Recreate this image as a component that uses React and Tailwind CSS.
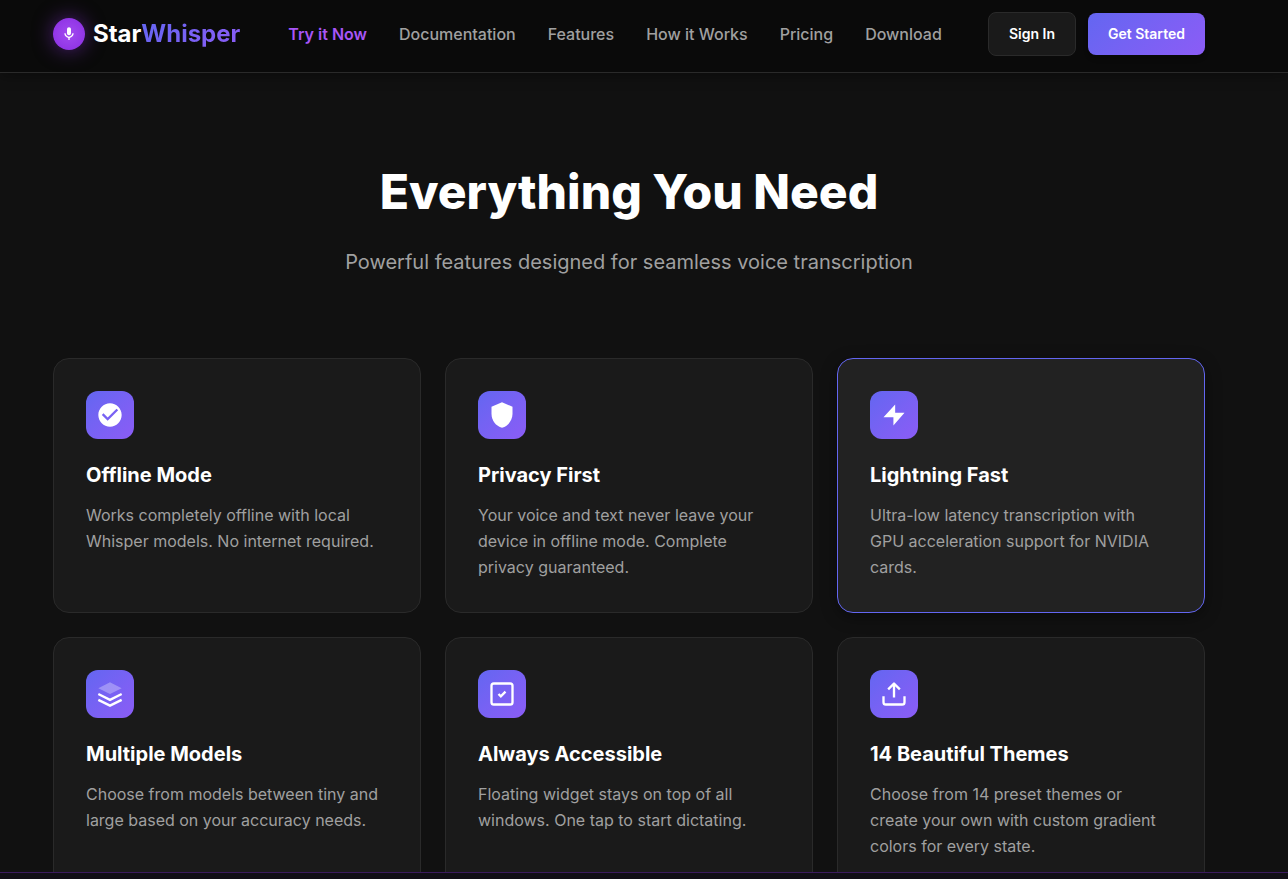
const NAV_LINKS = ["Documentation", "Features", "How it Works", "Pricing", "Download"];

function CheckCircleIcon() {
  return (
    <svg viewBox="0 0 24 24" className="size-7" fill="currentColor" aria-hidden="true">
      <path d="M12 2C6.48 2 2 6.48 2 12s4.48 10 10 10 10-4.48 10-10S17.52 2 12 2zm-2 15l-5-5 1.41-1.41L10 14.17l7.59-7.59L19 8l-9 9z" />
    </svg>
  );
}

function ShieldIcon() {
  return (
    <svg viewBox="0 0 24 24" className="size-7" fill="currentColor" aria-hidden="true">
      <path d="M12 1L3 5v6c0 5.55 3.84 10.74 9 12 5.16-1.26 9-6.45 9-12V5l-9-4z" />
    </svg>
  );
}

function BoltIcon() {
  return (
    <svg viewBox="0 0 24 24" className="size-7" fill="currentColor" aria-hidden="true">
      <path d="M13 3L3 14h8.5v7L21 10h-8z" />
    </svg>
  );
}

function LayersIcon() {
  return (
    <svg viewBox="0 0 24 24" className="size-7" fill="none" aria-hidden="true">
      <path d="M12 2L2 7l10 5 10-5-10-5z" fill="currentColor" opacity="0.3" />
      <path d="M2 17l10 5 10-5M2 12l10 5 10-5" stroke="currentColor" strokeWidth="2" />
    </svg>
  );
}

function CheckSquareIcon() {
  return (
    <svg viewBox="0 0 24 24" className="size-7" fill="none" stroke="currentColor" strokeWidth="2" aria-hidden="true">
      <rect x="3" y="3" width="18" height="18" rx="2" />
      <path d="M9 12l2 2 4-4" />
    </svg>
  );
}

function UploadIcon() {
  return (
    <svg
      viewBox="0 0 24 24"
      className="size-7"
      fill="none"
      stroke="currentColor"
      strokeWidth="2"
      strokeLinejoin="round"
      aria-hidden="true"
    >
      <path d="M12 15V3M7 8l5-5 5 5M3 14v5a2 2 0 0 0 2 2h14a2 2 0 0 0 2-2v-5" />
    </svg>
  );
}

const FEATURES = [
  {
    title: "Offline Mode",
    text: "Works completely offline with local Whisper models. No internet required.",
    Icon: CheckCircleIcon,
  },
  {
    title: "Privacy First",
    text: "Your voice and text never leave your device in offline mode. Complete privacy guaranteed.",
    Icon: ShieldIcon,
  },
  {
    title: "Lightning Fast",
    text: "Ultra-low latency transcription with GPU acceleration support for NVIDIA cards.",
    Icon: BoltIcon,
    active: true,
  },
  {
    title: "Multiple Models",
    text: "Choose from models between tiny and large based on your accuracy needs.",
    Icon: LayersIcon,
  },
  {
    title: "Always Accessible",
    text: "Floating widget stays on top of all windows. One tap to start dictating.",
    Icon: CheckSquareIcon,
  },
  {
    title: "14 Beautiful Themes",
    text: "Choose from 14 preset themes or create your own with custom gradient colors for every state.",
    Icon: UploadIcon,
  },
];

function Header() {
  return (
    <header className="z-10 border-b border-[#2a2a2a] bg-[#0a0a0a] pr-[30px] shadow-[0_4px_12px_rgba(0,0,0,0.3)]">
      <div className="mx-auto flex h-[72px] max-w-[1200px] items-center px-6 pb-1">
        <a href="#home" className="flex items-center gap-2">
          <span className="flex size-8 items-center justify-center rounded-full bg-radial from-[#a24af0] to-[#8a2be2] shadow-[0_0_20px_rgba(147,51,234,0.5)]">
            <svg viewBox="0 0 24 24" className="size-4 text-white" fill="currentColor" aria-hidden="true">
              <path d="M12 14c1.66 0 3-1.34 3-3V5c0-1.66-1.34-3-3-3S9 3.34 9 5v6c0 1.66 1.34 3 3 3z" />
              <path d="M17 11c0 2.76-2.24 5-5 5s-5-2.24-5-5H5c0 3.53 2.61 6.43 6 6.92V21h2v-3.08c3.39-.49 6-3.39 6-6.92h-2z" />
            </svg>
          </span>
          <span className="text-2xl font-bold text-white">
            Star
            <span className="bg-linear-135 from-[#6366f1] to-[#8b5cf6] bg-clip-text text-transparent">Whisper</span>
          </span>
        </a>
        <nav className="ml-12 flex items-center gap-8 text-base font-medium whitespace-nowrap text-[#a0a0a0]">
          <a href="#try" className="font-semibold text-[#a855f7]">Try it Now</a>
          {NAV_LINKS.map((label) => (
            <a key={label} href="#section">{label}</a>
          ))}
        </nav>
        <div className="ml-auto flex items-center gap-3 text-sm font-semibold whitespace-nowrap text-white">
          <button type="button" className="h-11 rounded-lg border border-[#2a2a2a] bg-[#1a1a1a] px-5">
            Sign In
          </button>
          <button type="button" className="h-[42px] rounded-lg bg-linear-135 from-[#6366f1] to-[#8b5cf6] px-5 shadow-md">
            Get Started
          </button>
        </div>
      </div>
    </header>
  );
}

function FeatureCard({ title, text, Icon, active }) {
  const tone = active
    ? "border-[#6366f1] bg-[#222222] shadow-[0_4px_16px_rgba(0,0,0,0.4)]"
    : "border-[#2a2a2a] bg-[#1a1a1a]";
  return (
    <article className={`rounded-2xl border p-8 ${tone}`}>
      <div className="mb-5 flex size-12 items-center justify-center rounded-xl bg-linear-135 from-[#6366f1] to-[#8b5cf6] text-white">
        <Icon />
      </div>
      <h3 className="mb-[11px] text-xl leading-8 font-bold text-white">{title}</h3>
      <p className="text-base leading-[26px] text-[#a0a0a0]">{text}</p>
    </article>
  );
}

export default function App() {
  return (
    <div className="flex h-screen flex-col overflow-hidden bg-[#111111] font-[Inter,sans-serif]">
      <Header />
      <main className="min-h-0 flex-1 overflow-hidden pr-[30px]">
        <section className="mx-auto max-w-[1200px] px-6 pt-20">
          <div className="mb-20 text-center">
            <h2 className="mb-4 text-5xl leading-[77px] font-extrabold text-white">Everything You Need</h2>
            <p className="text-xl leading-8 text-[#a0a0a0]">
              Powerful features designed for seamless voice transcription
            </p>
          </div>
          <div className="grid grid-cols-3 gap-6">
            {FEATURES.map((feature) => (
              <FeatureCard key={feature.title} {...feature} />
            ))}
          </div>
        </section>
      </main>
      <footer className="h-[7px] shrink-0 border-t border-[#3b1a5e] bg-[#110e16]" />
    </div>
  );
}
